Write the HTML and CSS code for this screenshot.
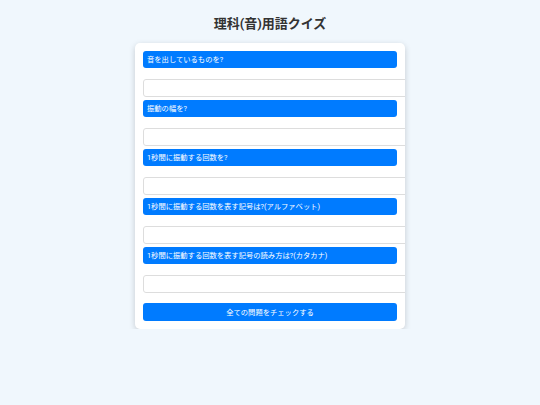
FILE: index.html
```html
<!DOCTYPE html>
<html lang="ja">
<head>
    <meta charset="UTF-8">
    <title>理科(音)用語クイズ</title>
    <link rel="stylesheet" href="styles.css">
</head>
<body>
    <h1 class="title">理科(音)用語クイズ</h1>

    <div class="quiz">
        <div class="question">
            <label class="question-text">音を出しているものを?</label>
            <input type="text" class="answer">
        </div>
        <div class="question">
            <label class="question-text">振動の幅を?</label>
            <input type="text" class="answer">
        </div>
        <div class="question">
            <label class="question-text">1秒間に振動する回数を?</label>
            <input type="text" class="answer">
        </div>
        <div class="question">
            <label class="question-text">1秒間に振動する回数を表す記号は?(アルファベット)</label>
            <input type="text" class="answer">
        </div>
        <div class="question">
            <label class="question-text">1秒間に振動する回数を表す記号の読み方は?(カタカナ)</label>
            <input type="text" class="answer">
        </div>
        <button class="check-button">全ての問題をチェックする</button>
    </div>
</body>
</html>
```

FILE: styles.css
```css
:root {
    --primary: #007bff;
    --text: #333;
    --border: #dddddd;
}

body {
    font-family: Roboto, "Noto Sans CJK JP", sans-serif;
    background: #f0f7fd;
    margin: 0;
    color: var(--text);
}

.title {
    font-size: 13px;
    line-height: 16px;
    text-align: center;
    margin: 16px 0 11px;
    color: var(--text);
}

.quiz {
    width: 254px;
    margin: 0 auto;
    padding: 8px;
    background: white;
    border-radius: 5px;
    box-shadow: 0 2px 6px rgba(0,0,0,0.18);
    overflow: hidden;
}

.question-text {
    display: block;
    height: 17px;
    line-height: 17px;
    padding: 0 4px;
    background: var(--primary);
    color: white;
    font-size: 7.3px;
    border-radius: 3px;
    margin-bottom: 10.5px;
}

.answer {
    display: block;
    width: 100%;
    height: 16px;
    padding: 0 8px;
    margin: 0 0 3.5px;
    border: 1px solid var(--border);
    border-radius: 3px;
    font-size: 8px;
}

.check-button {
    display: block;
    width: 100%;
    height: 18px;
    margin-top: 10.5px;
    padding: 0;
    background: var(--primary);
    color: white;
    border: none;
    border-radius: 3px;
    font-family: inherit;
    font-size: 7.3px;
    cursor: pointer;
}
```
